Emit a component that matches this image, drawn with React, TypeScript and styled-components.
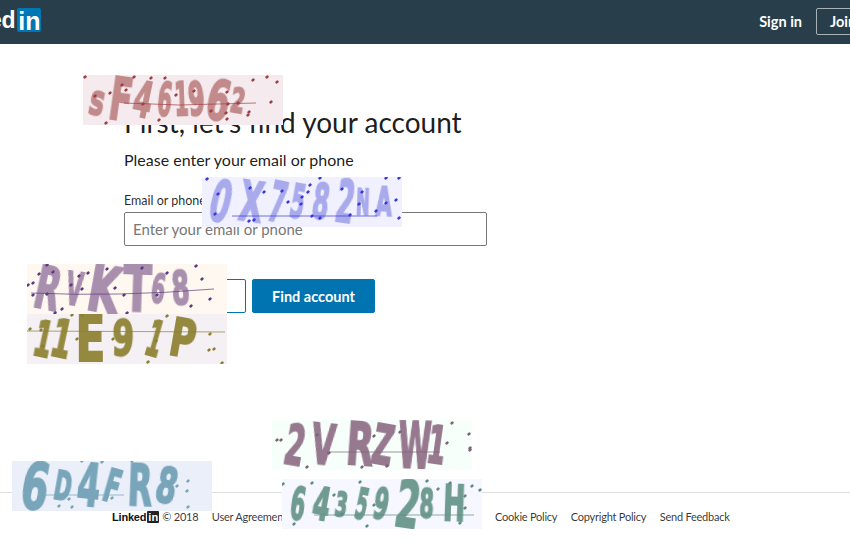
import React from "react";
import styled, { createGlobalStyle } from "styled-components";

const Global = createGlobalStyle`
  html, body { margin: 0; padding: 0; background: #fff; overflow: hidden; }
  body { font-family: "Lato", "Noto Sans", sans-serif; color: rgba(0,0,0,.85); }
  * { box-sizing: border-box; }
`;

const Page = styled.div`
  position: relative;
  width: 850px;
  height: 540px;
  display: flex;
  flex-direction: column;
  overflow: hidden;
`;

const Header = styled.header`
  height: 44px;
  flex: none;
  background: #283e4a;
  display: flex;
  align-items: flex-start;
  justify-content: space-between;
  margin: 0 -64px 0 -57px;
  padding: 8px 0 0 0;
`;

const Logo = styled.div`
  display: flex;
  align-items: center;
  height: 24px;
  font-family: "Liberation Sans", sans-serif;
  font-weight: 700;
  font-size: 23px;
  letter-spacing: -0.3px;
  color: #fff;
`;

const LogoBox = styled.span`
  width: 24px;
  height: 24px;
  margin-left: 2px;
  background: #0077b5;
  border-radius: 2px;
  color: #fff;
  display: flex;
  align-items: center;
  justify-content: center;
  font-size: 25px;
  line-height: 24px;
  letter-spacing: 0;
  padding-top: 2px;
`;

const HeaderActions = styled.nav`
  display: flex;
  align-items: center;
  gap: 14px;
  height: 27px;
`;

const SignIn = styled.a`
  color: #fff;
  font-weight: 700;
  font-size: 14.5px;
  line-height: 27px;
`;

const JoinButton = styled.a`
  height: 27px;
  width: 98px;
  border: 1px solid #a9b2b7;
  border-radius: 2px;
  color: #fff;
  font-weight: 700;
  font-size: 14.5px;
  line-height: 25px;
  padding-left: 13px;
`;

const Main = styled.main`
  flex: 1;
  padding: 59px 0 0 124px;
`;

const Title = styled.h1`
  margin: 0;
  font-size: 28px;
  font-weight: 400;
  line-height: 38px;
  color: rgba(0,0,0,.9);
`;

const Subtitle = styled.p`
  margin: 9px 0 0;
  font-size: 16px;
  line-height: 20px;
  color: rgba(0,0,0,.9);
`;

const Label = styled.label`
  display: block;
  margin-top: 23px;
  font-size: 12.5px;
  line-height: 16px;
  color: rgba(0,0,0,.85);
`;

const Input = styled.input`
  display: block;
  margin-top: 3px;
  width: 363px;
  height: 34px;
  border: 1px solid #777;
  border-radius: 2px;
  padding: 0 8px;
  font-family: inherit;
  font-size: 15px;
  background: #fff;
  &::placeholder { color: #777; opacity: 1; }
`;

const Actions = styled.div`
  display: flex;
  gap: 6px;
  margin-top: 33px;
`;

const Button = styled.button<{ $primary?: boolean }>`
  height: 34px;
  width: ${p => (p.$primary ? "123px" : "122px")};
  border: 1px solid #0073b1;
  border-radius: 2px;
  background: ${p => (p.$primary ? "#0073b1" : "#fff")};
  color: ${p => (p.$primary ? "#fff" : "#0073b1")};
  font-family: inherit;
  font-weight: 700;
  font-size: 14.5px;
`;

const Footer = styled.footer`
  flex: none;
  height: 48px;
  border-top: 1px solid #e0e0df;
  display: flex;
  align-items: center;
  gap: 13.5px;
  padding: 0 0 0 112px;
  font-size: 11px;
  letter-spacing: -0.23px;
  color: rgba(0,0,0,.8);
`;

const FooterBrand = styled.span`
  display: flex;
  align-items: center;
  gap: 3px;
`;

const FooterLogo = styled.span`
  display: flex;
  align-items: center;
  font-family: "Liberation Sans", sans-serif;
  font-weight: 700;
  font-size: 11px;
  letter-spacing: -0.2px;
  color: #111;
`;

const FooterLogoBox = styled.span`
  width: 12px;
  height: 12px;
  margin-left: 1px;
  background: #222;
  border-radius: 1px;
  color: #fff;
  font-size: 11px;
  line-height: 13px;
  text-align: center;
  letter-spacing: 0;
`;

const CaptchaBox = styled.div<{ $x: number; $y: number; $bg: string; $ink: string; $pad: number }>`
  position: absolute;
  left: ${p => p.$x}px;
  top: ${p => p.$y}px;
  width: 200px;
  height: 50px;
  overflow: hidden;
  display: flex;
  align-items: center;
  padding-left: ${p => p.$pad}px;
  background: ${p => p.$bg};
  color: ${p => p.$ink};
  font-family: "DejaVu Sans", sans-serif;
  font-weight: 700;
`;

const Glyph = styled.span<{ $w: number; $s: number; $r: number; $sx: number }>`
  flex: none;
  width: ${p => p.$w}px;
  text-align: center;
  font-size: ${p => Math.round(p.$s * 1.18)}px;
  line-height: 50px;
  -webkit-text-stroke: 1.8px currentColor;
  filter: blur(0.5px);
  transform: rotate(${p => p.$r + 2}deg) scale(${p => (p.$sx * 0.82).toFixed(2)}, 1.1);
`;

const Noise = styled.svg`
  position: absolute;
  inset: 0;
  width: 200px;
  height: 50px;
`;

type G = [string, number, number, number, number];
type CaptchaData = {
  x: number; y: number; bg: string; ink: string; dot: string; pad: number;
  glyphs: G[]; line: string; dots: [number, number][];
};

const captchas: CaptchaData[] = [
  { x: 83, y: 75, bg: "#f5ebee", ink: "#c28a8a", dot: "#a23f44", pad: 4,
    glyphs: [["s",18,32,10,.8],["F",24,46,6,.75],["4",24,38,10,.72],["6",18,36,4,.6],["1",13,36,-4,.6],["9",19,36,-6,.7],["6",24,42,10,.8],["2",22,26,8,.8]],
    line: "M41 28 L96 30 L173 28",
    dots: [[2,2],[51,2],[68,3],[82,3],[184,2],[194,7],[170,5],[39,10],[12,21],[27,18],[43,15],[93,20],[144,17],[111,16],[60,29],[145,29],[155,28],[188,27],[165,40],[143,38],[128,36],[76,45],[23,48],[166,37],[144,44]] },
  { x: 202, y: 177, bg: "#f0f0ff", ink: "#a9aaec", dot: "#3a3ad8", pad: 2,
    glyphs: [["0",30,44,12,.68],["X",30,42,6,.75],["7",21,42,10,.6],["5",22,36,8,.6],["8",24,38,6,.65],["2",20,46,6,.6],["N",20,28,0,.6],["A",24,30,0,.72]],
    line: "M30 39 L175 39",
    dots: [[5,2],[118,1],[184,1],[197,1],[48,11],[62,15],[80,14],[108,8],[106,15],[100,20],[86,25],[99,27],[140,12],[160,15],[16,17],[157,27],[184,26],[194,23],[174,34],[13,37],[110,39],[118,41],[148,38],[47,44],[52,43],[197,41]] },
  { x: 27, y: 264, bg: "#fff8f0", ink: "#a98fae", dot: "#5c3a80", pad: 2,
    glyphs: [["R",32,46,10,.75],["V",22,34,6,.65],["K",36,50,8,.85],["T",28,50,0,.85],["6",20,30,6,.7],["8",24,36,-6,.75]],
    line: "M4 29 Q90 33 187 25",
    dots: [[20,1],[26,8],[12,10],[61,9],[80,5],[115,4],[169,2],[140,9],[175,15],[1,21],[6,19],[52,12],[44,21],[88,24],[55,25],[20,30],[6,31],[97,31],[130,31],[183,35],[164,42],[35,45],[28,49],[100,49]] },
  { x: 27, y: 314, bg: "#f5f0f3", ink: "#94893f", dot: "#8a7f30", pad: 4,
    glyphs: [["1",16,38,10,.7],["1",24,40,10,.75],["E",34,50,-2,.9],["9",36,38,0,.85],["1",24,38,14,.6],["P",36,40,8,.9]],
    line: "M0 17 L198 18",
    dots: [[45,1],[140,2],[55,1],[3,15],[14,16],[50,25],[86,25],[129,27],[183,20],[16,32],[182,36],[187,35],[121,48],[195,49]] },
  { x: 272, y: 420, bg: "#f6fffa", ink: "#97798f", dot: "#7d6378", pad: 8,
    glyphs: [["2",24,42,8,.7],["V",38,42,4,.75],["R",26,46,2,.8],["Z",22,42,8,.7],["W",34,50,0,.62],["1",16,40,6,.7]],
    line: "M55 32 L168 32",
    dots: [[180,3],[197,14],[175,23],[198,28],[198,30],[5,20],[45,15],[102,16],[128,12],[35,47],[90,47],[115,46],[57,33],[9,20]] },
  { x: 282, y: 479, bg: "#f6f7ff", ink: "#709b91", dot: "#5f8d85", pad: 3,
    glyphs: [["6",24,34,6,.65],["4",22,34,8,.75],["3",20,26,6,.7],["5",18,32,10,.55],["9",22,32,8,.68],["2",24,50,6,.72],["8",22,30,0,.72],["H",30,38,0,.72]],
    line: "M32 36 L192 36",
    dots: [[1,5],[30,4],[78,3],[145,2],[168,4],[190,7],[198,11],[156,10],[183,17],[183,29],[178,44],[85,47],[12,45],[52,16],[92,26],[60,35]] },
  { x: 12, y: 461, bg: "#eaeffa", ink: "#78a5b9", dot: "#78a5b9", pad: 4,
    glyphs: [["6",34,50,8,.8],["D",22,30,8,.72],["4",28,46,4,.75],["F",22,34,14,.7],["R",30,44,0,.75],["8",26,38,10,.8]],
    line: "M30 34 L112 34",
    dots: [[70,0],[90,1],[120,0],[176,20],[175,30],[165,25],[57,38],[47,45],[60,46],[100,37],[120,35],[95,36],[176,46]] },
];

function Captcha({ data }: { data: CaptchaData }) {
  return (
    <CaptchaBox $x={data.x} $y={data.y} $bg={data.bg} $ink={data.ink} $pad={data.pad}>
      {data.glyphs.map(([c, w, s, r, sx], i) => (
        <Glyph key={i} $w={w} $s={s} $r={r} $sx={sx}>{c}</Glyph>
      ))}
      <Noise viewBox="0 0 200 50">
        <path d={data.line} fill="none" stroke={data.dot} strokeWidth="1" opacity="0.7" />
        {data.dots.map(([x, y], i) => (
          <rect key={i} x={x - 1.75} y={y - 1.25} width="3.5" height="2.5" rx="1" fill={data.dot} transform={`rotate(-40 ${x} ${y})`} />
        ))}
      </Noise>
    </CaptchaBox>
  );
}

export default function App() {
  return (
    <Page>
      <Global />
      <Header>
        <Logo>Linked<LogoBox>in</LogoBox></Logo>
        <HeaderActions>
          <SignIn>Sign in</SignIn>
          <JoinButton>Join now</JoinButton>
        </HeaderActions>
      </Header>
      <Main>
        <Title>First, let's find your account</Title>
        <Subtitle>Please enter your email or phone</Subtitle>
        <Label htmlFor="account">Email or phone</Label>
        <Input id="account" placeholder="Enter your email or phone" />
        <Actions>
          <Button>Back</Button>
          <Button $primary>Find account</Button>
        </Actions>
      </Main>
      <Footer>
        <FooterBrand>
          <FooterLogo>Linked<FooterLogoBox>in</FooterLogoBox></FooterLogo>
          <span>© 2018</span>
        </FooterBrand>
        <span>User Agreement</span>
        <span>Privacy Policy</span>
        <span>Community Guidelines</span>
        <span>Cookie Policy</span>
        <span>Copyright Policy</span>
        <span>Send Feedback</span>
      </Footer>
      {captchas.map((c, i) => <Captcha key={i} data={c} />)}
    </Page>
  );
}
